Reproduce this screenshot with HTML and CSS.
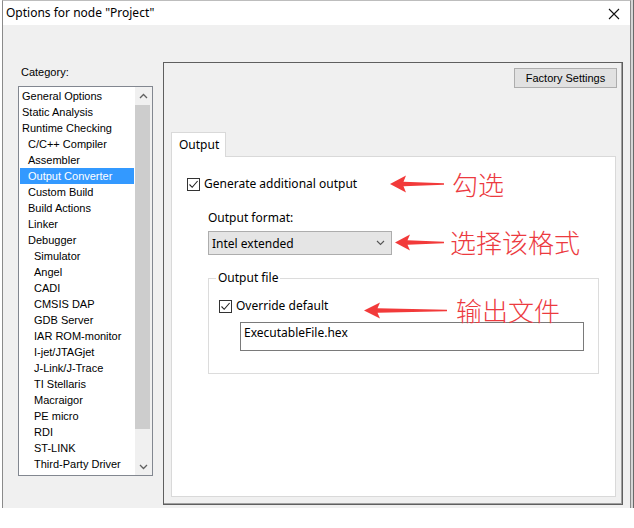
FILE: index.html
```html
<!DOCTYPE html>
<html>
<head>
<meta charset="utf-8">
<link rel="stylesheet" href="styles.css">
</head>
<body>
<div class="window">
  <div class="titlebar">
    <span class="title">Options for node "Project"</span>
    <svg class="close" width="12" height="12" viewBox="0 0 12 12"><path d="M1 1L11 11M11 1L1 11" stroke="#111" stroke-width="1.1" fill="none"/></svg>
  </div>
  <div class="body">
    <div class="leftcol">
      <div class="cat-label">Category:</div>
      <div class="listbox">
        <ul class="items">
          <li class="l0">General Options</li>
          <li class="l0">Static Analysis</li>
          <li class="l0">Runtime Checking</li>
          <li class="l1">C/C++ Compiler</li>
          <li class="l1">Assembler</li>
          <li class="l1 sel">Output Converter</li>
          <li class="l1">Custom Build</li>
          <li class="l1">Build Actions</li>
          <li class="l1">Linker</li>
          <li class="l1">Debugger</li>
          <li class="l2">Simulator</li>
          <li class="l2">Angel</li>
          <li class="l2">CADI</li>
          <li class="l2">CMSIS DAP</li>
          <li class="l2">GDB Server</li>
          <li class="l2">IAR ROM-monitor</li>
          <li class="l2">I-jet/JTAGjet</li>
          <li class="l2">J-Link/J-Trace</li>
          <li class="l2">TI Stellaris</li>
          <li class="l2">Macraigor</li>
          <li class="l2">PE micro</li>
          <li class="l2">RDI</li>
          <li class="l2">ST-LINK</li>
          <li class="l2">Third-Party Driver</li>
        </ul>
        <div class="vscroll">
          <div class="sb-btn"><svg width="9" height="6" viewBox="0 0 9 6"><path d="M1 5L4.5 1.5L8 5" stroke="#606060" stroke-width="1.3" fill="none"/></svg></div>
          <div class="sb-track"><div class="sb-thumb"></div></div>
          <div class="sb-btn"><svg width="9" height="6" viewBox="0 0 9 6"><path d="M1 1L4.5 4.5L8 1" stroke="#606060" stroke-width="1.3" fill="none"/></svg></div>
        </div>
      </div>
    </div>
    <div class="panel">
      <div class="btn-row"><div class="btn">Factory Settings</div></div>
      <div class="tabs">
        <div class="tab-strip"><div class="tab">Output</div></div>
        <div class="tab-page">
          <div class="check-row main-check">
            <span class="checkbox"><svg width="11" height="11" viewBox="0 0 11 11"><path d="M1.5 5.5L4.2 8.3L9.6 2" stroke="#222" stroke-width="1.1" fill="none"/></svg></span>
            <span>Generate additional output</span>
          </div>
          <div class="format">
            <div class="field-label">Output format:</div>
            <div class="select"><span>Intel extended</span><svg width="9" height="6" viewBox="0 0 9 6"><path d="M1 1L4.5 4.5L8 1" stroke="#555" stroke-width="1.1" fill="none"/></svg></div>
          </div>
          <div class="group">
            <div class="legend">Output file</div>
            <div class="check-row">
              <span class="checkbox"><svg width="11" height="11" viewBox="0 0 11 11"><path d="M1.5 5.5L4.2 8.3L9.6 2" stroke="#222" stroke-width="1.1" fill="none"/></svg></span>
              <span>Override default</span>
            </div>
            <div class="textbox">ExecutableFile.hex</div>
          </div>
        </div>
      </div>
    </div>
  </div>
  <div class="note note1">
    <svg class="arrow" width="54" height="18" viewBox="0 0 54 18"><polygon points="0,9 16,0.5 13.5,6.8 54,8.2 54,9.8 13.5,11.2 16,17.5" fill="#f23a3a"/></svg>
    <span class="note-text">勾选</span>
  </div>
  <div class="note note2">
    <svg class="arrow" width="49" height="17" viewBox="0 0 49 17"><polygon points="0,8.5 15,0.5 12.5,6.3 49,7.7 49,9.3 12.5,10.7 15,16.5" fill="#f23a3a"/></svg>
    <span class="note-text">选择该格式</span>
  </div>
  <div class="note note3">
    <svg class="arrow" width="83" height="17" viewBox="0 0 83 17"><polygon points="0,8.5 16,0.5 13.5,6.2 83,7.8 83,9.2 13.5,10.8 16,16.5" fill="#f23a3a"/></svg>
    <span class="note-text">输出文件</span>
  </div>
</div>
</body>
</html>
```

FILE: styles.css
```css
html, body {
  margin: 0;
  padding: 0;
  background: #ffffff;
}
body {
  width: 634px;
  height: 528px;
  overflow: hidden;
  font-family: "Noto Sans", "Liberation Sans", sans-serif;
  font-size: 12px;
  color: #000;
}
.window {
  position: relative;
  box-sizing: border-box;
  margin-left: 2px;
  width: 629px;
  height: 508px;
  border-left: 1px solid #8a8a8a;
  border-right: 1px solid #8a8a8a;
  border-top: 1px solid #bdbdbd;
  display: flex;
  flex-direction: column;
  box-shadow: 2px 0 0 #d6d6d6, 3px 0 0 #6a6a6a;
}
.titlebar {
  height: 24px;
  background: #ffffff;
  display: flex;
  align-items: center;
  padding-left: 3px;
  padding-right: 10px;
  justify-content: space-between;
}
.title {
  font-size: 12px;
  line-height: 16px;
  margin-top: -1px;
}
.close {
  margin-top: 1px;
}
.body {
  flex: 1;
  background: #f0f0f0;
  display: flex;
  align-items: flex-start;
  padding-left: 15px;
  gap: 10px;
}
.leftcol {
  width: 135px;
  padding-top: 39px;
  display: flex;
  flex-direction: column;
}
.cat-label {
  font-family: "Liberation Sans", sans-serif;
  font-size: 11px;
  line-height: 16px;
  padding-left: 3px;
}
.listbox {
  margin-top: 6px;
  box-sizing: border-box;
  height: 390px;
  border: 1px solid #828790;
  background: #ffffff;
  display: flex;
}
.items {
  list-style: none;
  margin: 0;
  padding: 1px 1px 0 1px;
  flex: 1;
  font-family: "Liberation Sans", sans-serif;
  font-size: 11px;
}
.items li {
  height: 16px;
  line-height: 16px;
  white-space: nowrap;
}
.items .l0 { padding-left: 2px; }
.items .l1 { padding-left: 8px; }
.items .l2 { padding-left: 14px; }
.items .sel {
  background: #3399ff;
  color: #ffffff;
}
.vscroll {
  width: 17px;
  background: #f0f0f0;
  display: flex;
  flex-direction: column;
}
.sb-btn {
  height: 17px;
  display: flex;
  align-items: center;
  justify-content: center;
}
.sb-track {
  flex: 1;
  padding-top: 1px;
}
.sb-thumb {
  margin-left: 0px;
  width: 15px;
  height: 324px;
  background: #cdcdcd;
}
.panel {
  margin-top: 37px;
  box-sizing: border-box;
  width: 460px;
  height: 443px;
  border: 1px solid #5f5f5f;
  box-shadow: inset -1px -1px 0 #a0a0a0;
  padding: 5px 5px 7px 7px;
  display: flex;
  flex-direction: column;
}
.btn-row {
  display: flex;
  justify-content: flex-end;
}
.btn {
  box-sizing: border-box;
  width: 103px;
  height: 20px;
  border: 1px solid #adadad;
  background: #e1e1e1;
  font-family: "Liberation Sans", sans-serif;
  font-size: 11px;
  line-height: 18px;
  text-align: center;
}
.tabs {
  margin-top: 44px;
  flex: 1;
  display: flex;
  flex-direction: column;
  width: 445px;
}
.tab-strip {
  display: flex;
  height: 24px;
}
.tab {
  box-sizing: border-box;
  width: 55px;
  height: 25px;
  background: #ffffff;
  border: 1px solid #d9d9d9;
  border-bottom: none;
  padding-left: 7px;
  line-height: 23px;
  position: relative;
  z-index: 1;
}
.tab-page {
  flex: 1;
  background: #ffffff;
  border: 1px solid #d9d9d9;
  display: flex;
  flex-direction: column;
  padding-left: 15px;
  padding-top: 20px;
}
.check-row {
  display: flex;
  align-items: center;
  gap: 4px;
  height: 14px;
  line-height: 14px;
}
.checkbox {
  box-sizing: border-box;
  width: 13px;
  height: 13px;
  border: 1px solid #333333;
  background: #ffffff;
  display: flex;
  align-items: center;
  justify-content: center;
}
.format {
  margin-top: 19px;
  padding-left: 21px;
}
.field-label {
  line-height: 16px;
}
.select {
  margin-top: 5px;
  box-sizing: border-box;
  width: 184px;
  height: 24px;
  background: #e5e5e5;
  border: 1px solid #adadad;
  display: flex;
  align-items: center;
  justify-content: space-between;
  padding: 0 6px 0 3px;
}
.group {
  margin-top: 23px;
  margin-left: 21px;
  box-sizing: border-box;
  width: 391px;
  height: 96px;
  border: 1px solid #dcdcdc;
  position: relative;
  padding-left: 10px;
  padding-top: 20px;
}
.legend {
  position: absolute;
  top: -9px;
  left: 7px;
  background: #ffffff;
  padding: 0 2px;
  line-height: 16px;
}
.textbox {
  margin-top: 9px;
  margin-left: 21px;
  box-sizing: border-box;
  width: 344px;
  height: 29px;
  border: 1px solid #7a7a7a;
  padding: 2px 0 0 3px;
  line-height: 16px;
}
.note {
  position: absolute;
  display: flex;
  align-items: center;
}
.note-text {
  font-family: "Noto Sans CJK SC", sans-serif;
  font-weight: 300;
  font-size: 26px;
  line-height: 30px;
  color: #ec3a3f;
  white-space: nowrap;
}
.note1 { left: 387px; top: 168px; }
.note1 .arrow { margin-right: 8px; }
.note2 { left: 392px; top: 226px; }
.note2 .arrow { margin-right: 6px; }
.note3 { left: 361px; top: 294px; }
.note3 .arrow { margin-right: 9px; }
```
